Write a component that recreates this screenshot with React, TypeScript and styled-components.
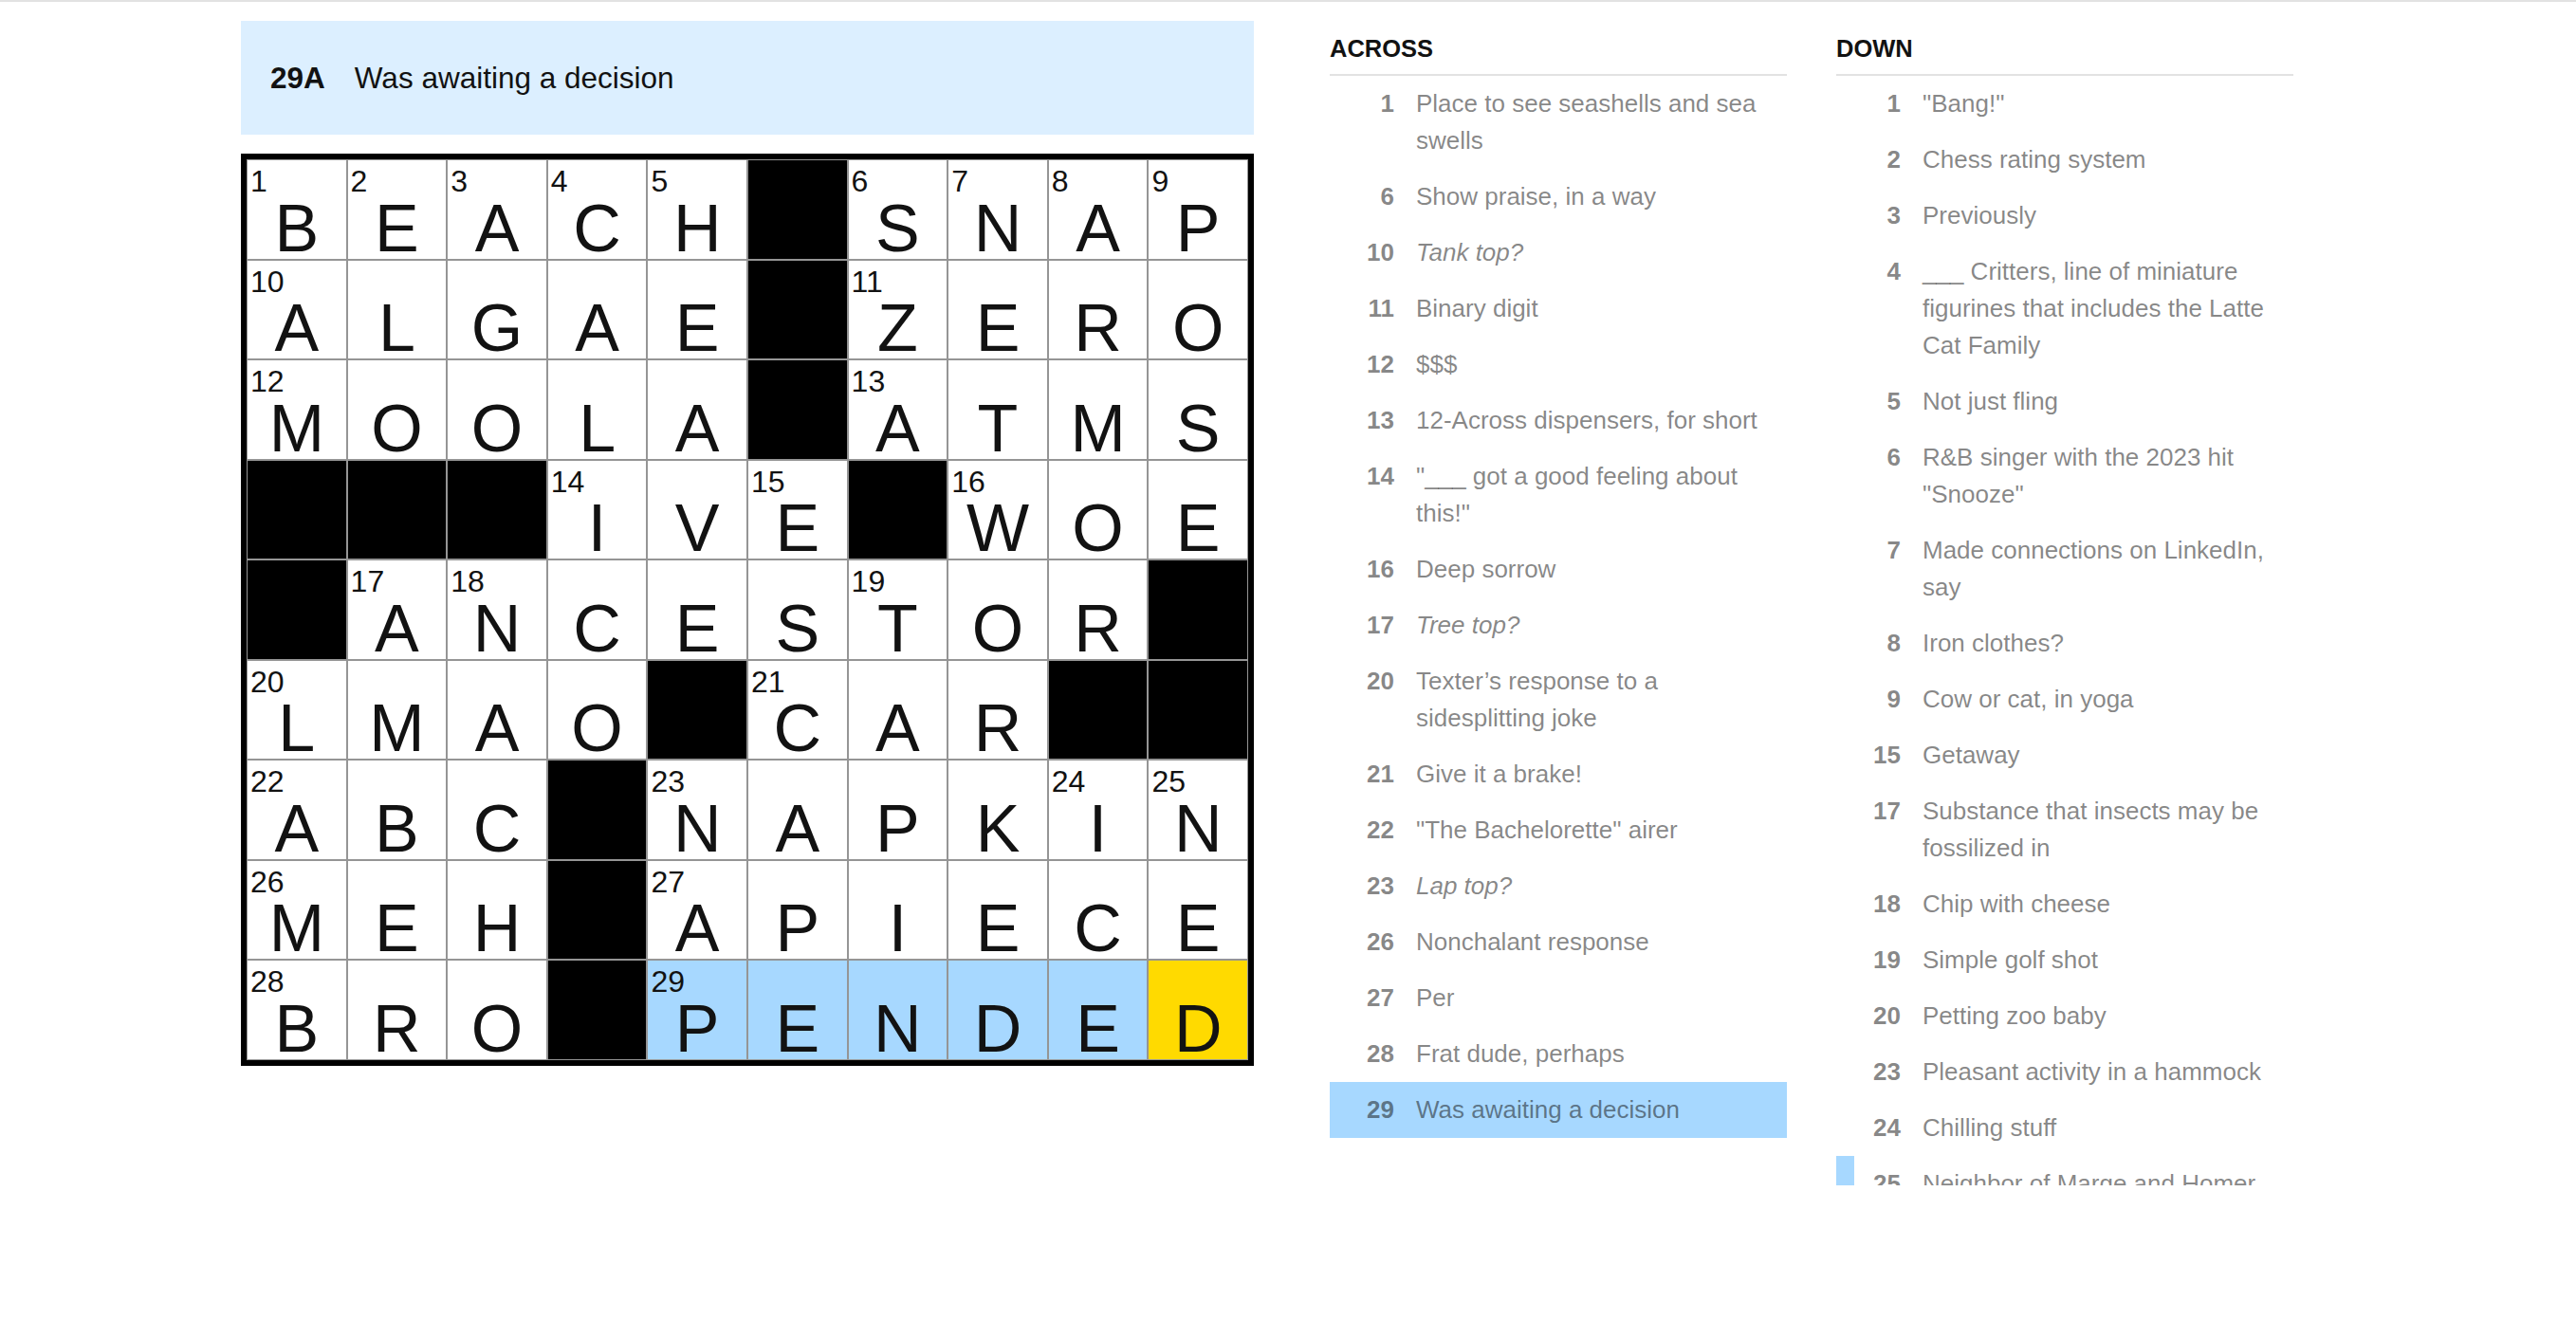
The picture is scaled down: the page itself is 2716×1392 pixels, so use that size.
import React from 'react'
import styled, { createGlobalStyle } from 'styled-components'

const GlobalStyle = createGlobalStyle`
  * {
    box-sizing: border-box;
  }
  html,
  body {
    margin: 0;
    padding: 0;
    background: #fff;
  }
  body {
    font-family: 'Liberation Sans', Arial, Helvetica, sans-serif;
    color: #121212;
  }
`

const ROWS = [
  'BEACH#SNAP',
  'ALGAE#ZERO',
  'MOOLA#ATMS',
  '###IVE#WOE',
  '#ANCESTOR#',
  'LMAO#CAR##',
  'ABC#NAPKIN',
  'MEH#APIECE',
  'BRO#PENDED',
]

// the selected word (29 Across) and the cursor cell
const ACTIVE_ROW = 8
const WORD_START = 4
const CURSOR_COL = 9

interface Clue {
  num: number
  text: string
  italic?: boolean
  active?: boolean
  cross?: boolean
}

const across: Clue[] = [
  { num: 1, text: 'Place to see seashells and sea swells' },
  { num: 6, text: 'Show praise, in a way' },
  { num: 10, text: 'Tank top?', italic: true },
  { num: 11, text: 'Binary digit' },
  { num: 12, text: '$$$' },
  { num: 13, text: '12-Across dispensers, for short' },
  { num: 14, text: '"___ got a good feeling about this!"' },
  { num: 16, text: 'Deep sorrow' },
  { num: 17, text: 'Tree top?', italic: true },
  { num: 20, text: 'Texter\u2019s response to a sidesplitting joke' },
  { num: 21, text: 'Give it a brake!' },
  { num: 22, text: '"The Bachelorette" airer' },
  { num: 23, text: 'Lap top?', italic: true },
  { num: 26, text: 'Nonchalant response' },
  { num: 27, text: 'Per' },
  { num: 28, text: 'Frat dude, perhaps' },
  { num: 29, text: 'Was awaiting a decision', active: true },
]

const down: Clue[] = [
  { num: 1, text: '"Bang!"' },
  { num: 2, text: 'Chess rating system' },
  { num: 3, text: 'Previously' },
  {
    num: 4,
    text: '___ Critters, line of miniature figurines that includes the Latte Cat Family',
  },
  { num: 5, text: 'Not just fling' },
  { num: 6, text: 'R&B singer with the 2023 hit "Snooze"' },
  { num: 7, text: 'Made connections on LinkedIn, say' },
  { num: 8, text: 'Iron clothes?' },
  { num: 9, text: 'Cow or cat, in yoga' },
  { num: 15, text: 'Getaway' },
  { num: 17, text: 'Substance that insects may be fossilized in' },
  { num: 18, text: 'Chip with cheese' },
  { num: 19, text: 'Simple golf shot' },
  { num: 20, text: 'Petting zoo baby' },
  { num: 23, text: 'Pleasant activity in a hammock' },
  { num: 24, text: 'Chilling stuff' },
  { num: 25, text: 'Neighbor of Marge and Homer', cross: true },
]

type CellState = 'plain' | 'word' | 'cursor'

const cellColors: Record<CellState, string> = {
  plain: '#fff',
  word: '#a7d8ff',
  cursor: '#ffda00',
}

const TopRule = styled.div`
  height: 2px;
  background: #e2e2e2;
`

const Layout = styled.main`
  display: flex;
  align-items: flex-start;
  padding: 20px 0 0 254px;
`

const Board = styled.div`
  display: flex;
  flex-direction: column;
  gap: 20px;
  width: 1068px;
`

const ClueBar = styled.div`
  display: flex;
  align-items: center;
  height: 120px;
  padding-left: 31px;
  background: #dcefff;
  font-size: 31.5px;
`

const BarLabel = styled.span`
  font-weight: 700;
  margin-right: 31px;
`

const Grid = styled.div`
  display: grid;
  grid-template-columns: repeat(10, 1fr);
  grid-template-rows: repeat(9, 1fr);
  width: 1068px;
  height: 962px;
  border: 6px solid #000;
`

const Cell = styled.div<{ $block: boolean; $state: CellState }>`
  position: relative;
  display: flex;
  flex-direction: column;
  justify-content: flex-end;
  padding-bottom: 2px;
  border: 1px solid #959595;
  background: ${(p) => (p.$block ? '#000' : cellColors[p.$state])};
`

const CellNum = styled.span`
  position: absolute;
  top: 6px;
  left: 3px;
  font-size: 32px;
  line-height: 1;
`

const Letter = styled.span`
  font-size: 70px;
  line-height: 60px;
  text-align: center;
`

const Lists = styled.div`
  display: flex;
  gap: 52px;
  margin-left: 80px;
`

const Section = styled.section`
  width: 482px;
`

const ListTitle = styled.h3`
  height: 58px;
  margin: 0;
  padding-top: 2px;
  border-bottom: 2px solid #e2e2e2;
  font-size: 25.5px;
  font-weight: 700;
  line-height: 54px;
  color: #121212;
`

const ClueList = styled.ol`
  height: 1170px;
  margin: 0;
  padding: 0;
  list-style: none;
  overflow: hidden;
`

const ClueItem = styled.li<{ $active?: boolean; $cross?: boolean }>`
  display: flex;
  padding: 10px 0;
  border-left: 19px solid ${(p) => (p.$cross ? '#a7d8ff' : 'transparent')};
  background: ${(p) => (p.$active ? '#a7d8ff' : 'transparent')};
  font-size: 26px;
  line-height: 39px;
  color: rgba(18, 18, 18, 0.52);
`

const ClueNum = styled.span`
  flex: none;
  width: 49px;
  margin-right: 23px;
  text-align: right;
  font-weight: 700;
`

const ClueText = styled.span<{ $italic?: boolean }>`
  flex: 1;
  font-style: ${(p) => (p.$italic ? 'italic' : 'normal')};
`

function isBlock(r: number, c: number) {
  if (r < 0 || c < 0 || r >= ROWS.length || c >= ROWS[0].length) return true
  return ROWS[r][c] === '#'
}

function numberGrid() {
  const nums: (number | null)[][] = []
  let n = 0
  ROWS.forEach((row, r) => {
    nums.push([])
    row.split('').forEach((_, c) => {
      const startsAcross = isBlock(r, c - 1) && !isBlock(r, c + 1)
      const startsDown = isBlock(r - 1, c) && !isBlock(r + 1, c)
      if (!isBlock(r, c) && (startsAcross || startsDown)) {
        n += 1
        nums[r].push(n)
      } else {
        nums[r].push(null)
      }
    })
  })
  return nums
}

function cellState(r: number, c: number): CellState {
  if (r !== ACTIVE_ROW) return 'plain'
  if (c === CURSOR_COL) return 'cursor'
  if (c >= WORD_START) return 'word'
  return 'plain'
}

function ClueSection({ title, clues }: { title: string; clues: Clue[] }) {
  return (
    <Section>
      <ListTitle>{title}</ListTitle>
      <ClueList>
        {clues.map((clue) => (
          <ClueItem key={clue.num} $active={clue.active} $cross={clue.cross}>
            <ClueNum>{clue.num}</ClueNum>
            <ClueText $italic={clue.italic}>{clue.text}</ClueText>
          </ClueItem>
        ))}
      </ClueList>
    </Section>
  )
}

export default function App() {
  const nums = numberGrid()

  return (
    <>
      <GlobalStyle />
      <TopRule />
      <Layout>
        <Board>
          <ClueBar>
            <BarLabel>29A</BarLabel>
            <span>Was awaiting a decision</span>
          </ClueBar>
          <Grid>
            {ROWS.map((row, r) =>
              row.split('').map((ch, c) => {
                const block = ch === '#'
                return (
                  <Cell key={`${r}-${c}`} $block={block} $state={cellState(r, c)}>
                    {!block && nums[r][c] && <CellNum>{nums[r][c]}</CellNum>}
                    {!block && <Letter>{ch}</Letter>}
                  </Cell>
                )
              }),
            )}
          </Grid>
        </Board>
        <Lists>
          <ClueSection title="ACROSS" clues={across} />
          <ClueSection title="DOWN" clues={down} />
        </Lists>
      </Layout>
    </>
  )
}
